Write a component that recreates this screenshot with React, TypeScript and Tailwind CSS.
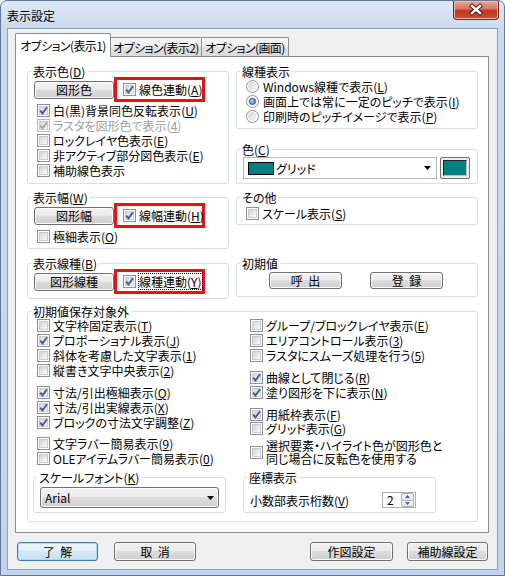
import React from "react";

type Kids = { children?: React.ReactNode; className?: string };

const Acc = ({ t, k }: { t: string; k: string }) => (
  <>
    {t}(<u>{k}</u>)
  </>
);

function Box({ on, disabled }: { on?: boolean; disabled?: boolean }) {
  return (
    <span
      className={`relative block w-[13px] h-[13px] shrink-0 border bg-white p-[1px] ${
        disabled ? "border-[#b8b8b8]" : "border-[#8e8f8f]"
      }`}
    >
      <span className="block h-full w-full border border-[#c9cdd3] bg-linear-to-br from-[#d2d5da] to-[#f9f9f9]" />
      {on && (
        <svg className="absolute left-[-1px] top-[-1px]" width="13" height="13" viewBox="0 0 13 13">
          <path
            d="M3.2 6.6 5.5 9.4 10 3.2"
            fill="none"
            stroke={disabled ? "#a4a4a4" : "#41599a"}
            strokeWidth="1.9"
          />
        </svg>
      )}
    </span>
  );
}

function Check({ on, disabled, children, className = "" }: Kids & { on?: boolean; disabled?: boolean }) {
  return (
    <div className={`flex items-center gap-[3px] h-[15px] whitespace-nowrap ${className}`}>
      <Box on={on} disabled={disabled} />
      <span className={disabled ? "text-[#a0a0a0]" : ""}>{children}</span>
    </div>
  );
}

function Radio({ on, children }: Kids & { on?: boolean }) {
  return (
    <div className="flex items-center gap-[4px] h-[15px] whitespace-nowrap">
      <span className="relative block w-[13px] h-[13px] shrink-0 rounded-full border border-[#8e8f8f] bg-white p-[1px]">
        <span className="block h-full w-full rounded-full bg-linear-to-br from-[#cfd3d8] to-[#f9f9f9]" />
        {on && (
          <span className="absolute left-[2px] top-[2px] w-[7px] h-[7px] rounded-full border border-[#1b4f8e] bg-radial-[at_35%_35%] from-[#bfe3ff] to-[#2a6bb8]" />
        )}
      </span>
      <span>{children}</span>
    </div>
  );
}

function Group({ title, className = "", children }: Kids & { title: React.ReactNode }) {
  return (
    <div className={`relative border border-[#d5dfe5] rounded-[3px] ${className}`}>
      <span className="absolute left-[3px] top-[-8px] bg-white px-[2px] leading-[15px] whitespace-nowrap">
        {title}
      </span>
      {children}
    </div>
  );
}

function Btn({ className = "", children, def }: Kids & { def?: boolean }) {
  return (
    <div
      className={`flex items-center justify-center rounded-[3px] border whitespace-pre ${
        def
          ? "border-[#3c7fb1] bg-[linear-gradient(#eef6fc,#e4f0fa_45%,#d6e9f7_50%,#c7e0f3)] shadow-[inset_0_0_0_1px_#a6dcf6]"
          : "border-[#707070] bg-[linear-gradient(#f2f2f2,#ebebeb_45%,#dddddd_50%,#cfcfcf)] shadow-[inset_0_0_0_1px_#fbfbfb]"
      } ${className}`}
    >
      {children}
    </div>
  );
}

function RedCheck({ children, focus }: Kids & { focus?: boolean }) {
  return (
    <div className="flex items-center gap-[3px] w-[91px] h-[25px] border-[3px] border-[#e3121b] bg-white pl-[6px] whitespace-nowrap">
      <Box on />
      <span className={focus ? "outline-1 outline-dotted outline-black" : ""}>{children}</span>
    </div>
  );
}

const Arrow = () => (
  <svg width="7" height="4" viewBox="0 0 7 4">
    <path d="M0 0h7L3.5 4z" fill="#000" />
  </svg>
);

const tabIdle =
  "h-[19px] flex items-center justify-center border border-b-0 border-l-0 border-[#898c95] rounded-tr-[2px] bg-[linear-gradient(#f6f6f6,#eeeeee_50%,#e3e3e3_50%,#dadada)] whitespace-nowrap tracking-[-0.6px]";

export default function App() {
  return (
    <div className="w-[505px] h-[576px] flex flex-col border border-[#5f7898] rounded-t-[7px] bg-[linear-gradient(#dde8f5,#cbdbef_28px,#c3d5ec)] font-['Noto_Sans_CJK_JP',sans-serif] text-[12px] leading-[15px] text-black [font-feature-settings:'palt'] overflow-hidden">
      {/* title bar */}
      <div className="h-[27px] flex items-start justify-between shrink-0">
        <span className="pl-[6px] pt-[7px]">表示設定</span>
        <div className="mr-[5px] w-[46px] h-[19px] rounded-b-[4px] border border-t-0 border-[#6b2a22] bg-[linear-gradient(#e9aa9e,#d9705f_45%,#c2361e_52%,#cf4b32)] shadow-[inset_0_0_0_1px_#f0b8ad]">
          <svg width="44" height="18" viewBox="0 0 44 18">
            <path d="M18 5 26 12M26 5 18 12" stroke="#4b1e18" strokeWidth="4.4" strokeLinecap="square" />
            <path d="M18 5 26 12M26 5 18 12" stroke="#fff" strokeWidth="2.4" strokeLinecap="square" />
          </svg>
        </div>
      </div>

      {/* client */}
      <div className="mx-[6px] h-[542px] border border-[#8ba0bc] bg-[#f0f0f0]">
        <div className="ml-[7px] mt-[4px] h-[23px] flex items-end">
          <div className="relative z-10 -mb-[1px] w-[96px] h-[24px] flex items-center justify-center border border-b-0 border-[#898c95] rounded-t-[2px] bg-white whitespace-nowrap tracking-[-0.6px]">
            オプション(表示1)
          </div>
          <div className={`w-[91px] ${tabIdle}`}>オプション(表示2)</div>
          <div className={`w-[87px] ${tabIdle}`}>オプション(画面)</div>
        </div>

        <div className="ml-[7px] w-[474px] h-[477px] border border-[#898c95] bg-white pt-[14px] pl-[11px]">
          {/* row 1 */}
          <div className="flex gap-[7px]">
            <Group title={<Acc t="表示色" k="D" />} className="w-[202px] h-[113px] pt-[5px] pl-[6px]">
              <div className="flex items-center">
                <Btn className="w-[80px] h-[18px]">図形色</Btn>
                <RedCheck>
                  <Acc t="線色連動" k="A" />
                </RedCheck>
              </div>
              <div className="mt-[1px] pl-[3px]">
                <Check on>
                  <Acc t="白(黒)背景同色反転表示" k="U" />
                </Check>
                <Check on disabled>
                  <Acc t="ラスタを図形色で表示" k="4" />
                </Check>
                <Check>
                  <Acc t="ロックレイヤ色表示" k="E" />
                </Check>
                <Check>
                  <Acc t="非アクティブ部分図色表示" k="E" />
                </Check>
                <Check>補助線色表示</Check>
              </div>
            </Group>
            <div className="w-[242px] h-[113px] flex flex-col justify-between">
              <Group title="線種表示" className="h-[58px] pt-[7px] pl-[9px]">
                <Radio>
                  <Acc t="Windows線種で表示" k="L" />
                </Radio>
                <Radio on>
                  <Acc t="画面上では常に一定のピッチで表示" k="I" />
                </Radio>
                <Radio>
                  <Acc t="印刷時のピッチイメージで表示" k="P" />
                </Radio>
              </Group>
              <Group title={<Acc t="色" k="C" />} className="h-[35px] pt-[7px] pl-[6px] flex items-start gap-[3px]">
                <div className="w-[194px] h-[22px] flex items-center border border-[#b6b9bf] bg-white pl-[4px] pr-[5px]">
                  <span className="w-[26px] h-[13px] border border-black bg-[#008080]" />
                  <span className="ml-[2px]">グリッド</span>
                  <span className="ml-auto flex">
                    <Arrow />
                  </span>
                </div>
                <div className="w-[30px] h-[22px] border border-[#6e6e6e] rounded-[2px] bg-[#ececec] p-[2px]">
                  <div className="h-full w-full border border-[#222] border-r-[#bdbdbd] border-b-[#bdbdbd] bg-[#008080]" />
                </div>
              </Group>
            </div>
          </div>

          {/* row 2 */}
          <div className="mt-[13px] flex gap-[7px] items-start">
            <Group title={<Acc t="表示幅" k="W" />} className="w-[202px] h-[52px] pt-[5px] pl-[6px]">
              <div className="flex items-center">
                <Btn className="w-[80px] h-[18px]">図形幅</Btn>
                <RedCheck>
                  <Acc t="線幅連動" k="H" />
                </RedCheck>
              </div>
              <div className="mt-[1px] pl-[3px]">
                <Check>
                  <Acc t="極細表示" k="O" />
                </Check>
              </div>
            </Group>
            <Group title="その他" className="w-[242px] h-[28px] pt-[8px] pl-[9px]">
              <Check>
                <Acc t="スケール表示" k="S" />
              </Check>
            </Group>
          </div>

          {/* row 3 */}
          <div className="mt-[14px] flex gap-[7px] items-start">
            <Group title={<Acc t="表示線種" k="B" />} className="w-[202px] h-[36px] pt-[5px] pl-[6px]">
              <div className="flex items-center">
                <Btn className="w-[80px] h-[18px]">図形線種</Btn>
                <RedCheck focus>
                  <Acc t="線種連動" k="Y" />
                </RedCheck>
              </div>
            </Group>
            <Group title="初期値" className="w-[242px] h-[34px] pt-[8px] pl-[32px] flex items-start gap-[28px]">
              <Btn className="w-[73px] h-[17px]">{"呼  出"}</Btn>
              <Btn className="w-[73px] h-[17px]">{"登  録"}</Btn>
            </Group>
          </div>

          {/* row 4 */}
          <Group title="初期値保存対象外" className="mt-[12px] w-[451px] h-[211px] pt-[6px]">
            <div className="flex h-[149px]">
              <div className="w-[222px] pl-[9px]">
                <Check>
                  <Acc t="文字枠固定表示" k="T" />
                </Check>
                <Check on>
                  <Acc t="プロポーショナル表示" k="J" />
                </Check>
                <Check>
                  <Acc t="斜体を考慮した文字表示" k="1" />
                </Check>
                <Check>
                  <Acc t="縦書き文字中央表示" k="2" />
                </Check>
                <Check on className="mt-[7px]">
                  <Acc t="寸法/引出極細表示" k="Q" />
                </Check>
                <Check on>
                  <Acc t="寸法/引出実線表示" k="X" />
                </Check>
                <Check on>
                  <Acc t="ブロックの寸法文字調整" k="Z" />
                </Check>
                <Check className="mt-[6px]">
                  <Acc t="文字ラバー簡易表示" k="9" />
                </Check>
                <Check>
                  <Acc t="OLEアイテムラバー簡易表示" k="0" />
                </Check>
              </div>
              <div>
                <Check>
                  <Acc t="グループ/ブロックレイヤ表示" k="E" />
                </Check>
                <Check>
                  <Acc t="エリアコントロール表示" k="3" />
                </Check>
                <Check>
                  <Acc t="ラスタにスムーズ処理を行う" k="5" />
                </Check>
                <Check on className="mt-[7px]">
                  <Acc t="曲線として閉じる" k="R" />
                </Check>
                <Check on>
                  <Acc t="塗り図形を下に表示" k="N" />
                </Check>
                <Check on className="mt-[7px] !h-[14px]">
                  <Acc t="用紙枠表示" k="F" />
                </Check>
                <Check className="!h-[14px]">
                  <Acc t="グリッド表示" k="G" />
                </Check>
                <div className="mt-[4px] flex items-center gap-[3px]">
                  <Box />
                  <span className="leading-[13px]">
                    選択要素・ハイライト色が図形色と
                    <br />
                    同じ場合に反転色を使用する
                  </span>
                </div>
              </div>
            </div>
            <div className="mt-[10px] pl-[5px] flex gap-[17px]">
              <Group title={<Acc t="スケールフォント" k="K" />} className="w-[193px] h-[36px] pt-[9px] pl-[6px]">
                <Btn className="w-[179px] h-[21px] !justify-between pl-[4px] pr-[4px]">
                  <span>Arial</span>
                  <Arrow />
                </Btn>
              </Group>
              <Group title="座標表示" className="w-[193px] h-[36px] pt-[14px] pl-[6px] flex items-start">
                <div className="w-[132px] h-[16px] flex items-center whitespace-nowrap">
                  <Acc t="小数部表示桁数" k="V" />
                </div>
                <div className="w-[34px] h-[16px] flex items-center border border-[#abadb3] bg-white pl-[4px]">
                  <span className="leading-[14px]">2</span>
                  <div className="ml-auto mr-[1px] w-[13px] h-[14px] flex flex-col">
                    <div className="flex-1 flex items-center justify-center border border-[#a3b0c4] rounded-t-[2px] bg-linear-to-b from-[#f7f9fc] to-[#dfe7f1]">
                      <svg width="5" height="3" viewBox="0 0 5 3">
                        <path d="M0 3h5L2.5 0z" fill="#4d6185" />
                      </svg>
                    </div>
                    <div className="flex-1 flex items-center justify-center border border-t-0 border-[#a3b0c4] rounded-b-[2px] bg-linear-to-b from-[#f7f9fc] to-[#dfe7f1]">
                      <svg width="5" height="3" viewBox="0 0 5 3">
                        <path d="M0 0h5L2.5 3z" fill="#4d6185" />
                      </svg>
                    </div>
                  </div>
                </div>
              </Group>
            </div>
          </Group>
        </div>

        {/* dialog buttons */}
        <div className="mt-[9px] px-[9px] flex justify-between">
          <div className="flex gap-[16px]">
            <Btn def className="w-[81px] h-[19px]">{"了  解"}</Btn>
            <Btn className="w-[82px] h-[19px]">{"取  消"}</Btn>
          </div>
          <div className="flex gap-[14px]">
            <Btn className="w-[83px] h-[19px]">作図設定</Btn>
            <Btn className="w-[81px] h-[19px]">補助線設定</Btn>
          </div>
        </div>
      </div>
    </div>
  );
}
